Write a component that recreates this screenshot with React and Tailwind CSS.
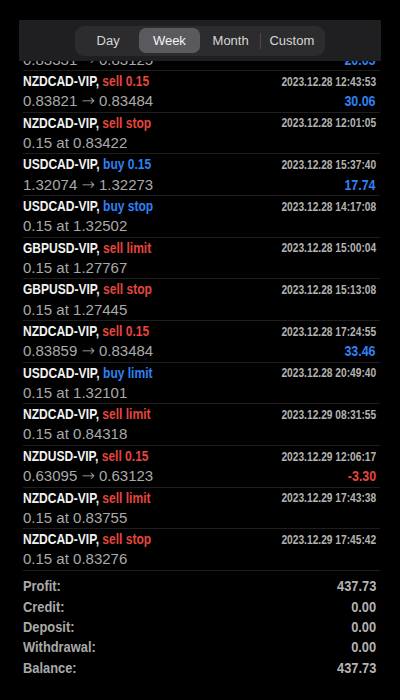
import React from 'react';

const rows = [
  { sym: 'NZDCAD-VIP', type: 'sell 0.15', side: 'sell', time: '2023.12.28 12:43:53', open: '0.83821', close: '0.83484', profit: '30.06' },
  { sym: 'NZDCAD-VIP', type: 'sell stop', side: 'sell', time: '2023.12.28 12:01:05', info: '0.15 at 0.83422' },
  { sym: 'USDCAD-VIP', type: 'buy 0.15', side: 'buy', time: '2023.12.28 15:37:40', open: '1.32074', close: '1.32273', profit: '17.74' },
  { sym: 'USDCAD-VIP', type: 'buy stop', side: 'buy', time: '2023.12.28 14:17:08', info: '0.15 at 1.32502' },
  { sym: 'GBPUSD-VIP', type: 'sell limit', side: 'sell', time: '2023.12.28 15:00:04', info: '0.15 at 1.27767' },
  { sym: 'GBPUSD-VIP', type: 'sell stop', side: 'sell', time: '2023.12.28 15:13:08', info: '0.15 at 1.27445' },
  { sym: 'NZDCAD-VIP', type: 'sell 0.15', side: 'sell', time: '2023.12.28 17:24:55', open: '0.83859', close: '0.83484', profit: '33.46' },
  { sym: 'USDCAD-VIP', type: 'buy limit', side: 'buy', time: '2023.12.28 20:49:40', info: '0.15 at 1.32101' },
  { sym: 'NZDCAD-VIP', type: 'sell limit', side: 'sell', time: '2023.12.29 08:31:55', info: '0.15 at 0.84318' },
  { sym: 'NZDUSD-VIP', type: 'sell 0.15', side: 'sell', time: '2023.12.29 12:06:17', open: '0.63095', close: '0.63123', profit: '-3.30' },
  { sym: 'NZDCAD-VIP', type: 'sell limit', side: 'sell', time: '2023.12.29 17:43:38', info: '0.15 at 0.83755' },
  { sym: 'NZDCAD-VIP', type: 'sell stop', side: 'sell', time: '2023.12.29 17:45:42', info: '0.15 at 0.83276' },
];

const totals = [
  ['Profit:', '437.73'],
  ['Credit:', '0.00'],
  ['Deposit:', '0.00'],
  ['Withdrawal:', '0.00'],
  ['Balance:', '437.73'],
];

// condensed bold look: no narrow face installed, so squeeze the bold one
const bold = 'font-bold inline-block whitespace-nowrap scale-x-[0.83]';

const Row = ({ r }) => (
  <div className="h-[41.67px] ml-[23px] mr-[20px] pr-[4px] pt-px border-b border-[#1e1e1e]">
    <div className="flex justify-between items-center h-[20px]">
      <span className={`${bold} origin-left text-[14.5px] text-[#f2f2f2]`}>
        {r.sym},{' '}
        <span className={r.side === 'buy' ? 'text-[#2f82f4]' : 'text-[#e5463d]'}>{r.type}</span>
      </span>
      <span className={`${bold} origin-right text-[12.3px] text-[#b3b3b3]`}>{r.time}</span>
    </div>
    <div className="flex justify-between items-center h-[19px]">
      <span className="text-[15px] text-[#a9a9a9] whitespace-nowrap">
        {r.info ?? (
          <>
            {r.open}{' '}
            <span className="font-['DejaVu_Sans',sans-serif] text-[16px] font-light">→</span>{' '}
            {r.close}
          </>
        )}
      </span>
      {r.profit && (
        <span className={`${bold} origin-right text-[15px] ${r.profit.startsWith('-') ? 'text-[#e5463d]' : 'text-[#2f82f4]'}`}>
          {r.profit}
        </span>
      )}
    </div>
  </div>
);

export default function App() {
  const tabs = ['Day', 'Week', 'Month', 'Custom'];
  return (
    <div className="relative w-[400px] h-[700px] overflow-hidden bg-black font-['Liberation_Sans',Arial,sans-serif]">
      <div className="pt-[29.33px]">
        <Row r={{ sym: 'NZDCAD-VIP', type: 'sell 0.15', side: 'sell', time: '2023.12.28 11:58:20', open: '0.83331', close: '0.83125', profit: '20.05' }} />
        {rows.map((r, i) => (
          <Row key={i} r={r} />
        ))}
        <div className="ml-[23px] mr-[20px] pr-[4px] pt-[5px]">
          {totals.map(([k, v]) => (
            <div key={k} className="flex justify-between items-center h-[20.3px] text-[15.5px] text-[#a9a9a9]">
              <span className={`${bold} origin-left`}>{k}</span>
              <span className={`${bold} origin-right text-[#b3b3b3]`}>{v}</span>
            </div>
          ))}
        </div>
      </div>

      {/* period selector floating over the list */}
      <div className="absolute top-0 left-0 right-0 h-[61px] bg-black">
        <div className="mt-[20px] mx-[19px] h-[41px] bg-[#1f1f21] flex items-center justify-center">
          <div className="w-[250px] h-[30px] rounded-[9px] bg-[#2c2c2e] flex items-center p-[2.5px]">
            {tabs.map((t, i) => (
              <React.Fragment key={t}>
                {i === 3 && <span className="w-px h-[16px] bg-[#4a4a4d] -ml-px" />}
                <div
                  className={`flex-1 h-full flex items-center justify-center text-[13px] rounded-[7px] ${
                    t === 'Week' ? 'bg-[#5a5a5e] text-[#f4f4f4]' : 'text-[#d6d6d6]'
                  }`}
                >
                  {t}
                </div>
              </React.Fragment>
            ))}
          </div>
        </div>
      </div>
    </div>
  );
}
